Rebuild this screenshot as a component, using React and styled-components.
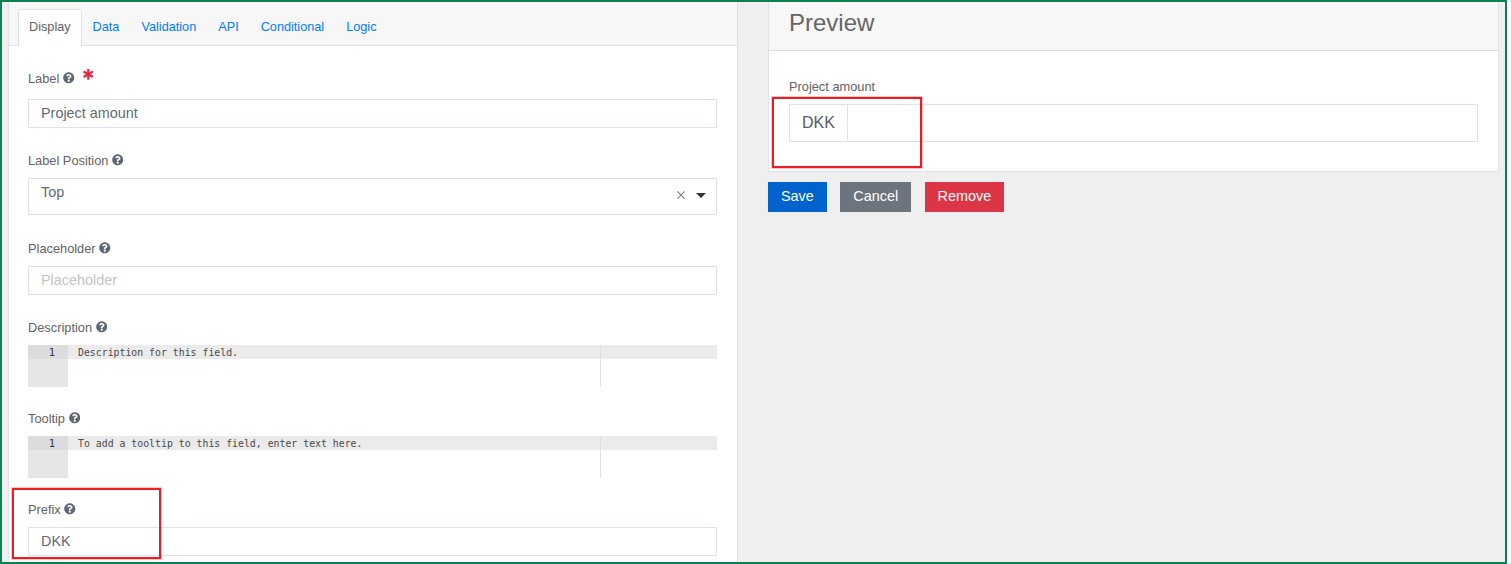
import styled, { createGlobalStyle } from "styled-components"
import { FaAsterisk, FaQuestionCircle } from "react-icons/fa"

const GlobalStyle = createGlobalStyle`
    html, body {
        margin: 0;
        padding: 0;
        background: #fff;
        overflow: hidden;
    }

    * {
        box-sizing: border-box;
    }
`

const Frame = styled.div`
    position: relative;
    width: 1507px;
    height: 564px;
    border: 2px solid #0b8050;
    background: #efefef;
    overflow: hidden;
    display: grid;
    grid-template-columns: 736px 1fr;
    font-family: "Liberation Sans", Arial, sans-serif;
    color: #626262;
`

const LeftColumn = styled.section`
    padding-left: 6px;
    height: 100%;
    overflow: hidden;
`

const EditPanel = styled.div`
    width: 730px;
    height: 600px;
    background: #fff;
    border-left: 1px solid #dfe1e8;
    border-right: 1px solid #dfe1e8;
`

const TabBar = styled.nav`
    height: 44px;
    padding: 7px 0 0 9px;
    background: #f7f7f7;
    border-bottom: 1px solid #dfe1e8;
    display: flex;
    align-items: flex-start;
`

const Tab = styled.a`
    height: 37px;
    padding: 0 10px;
    border: 1px solid transparent;
    border-bottom: 0;
    border-radius: 4px 4px 0 0;
    font-size: 12.7px;
    line-height: 34px;
    color: ${(p) => (p.$active ? "#626262" : "#007bff")};
    background: ${(p) => (p.$active ? "#fff" : "transparent")};
    border-color: ${(p) => (p.$active ? "#dfe1e8" : "transparent")};
`

const FormBody = styled.div`
    padding: 23px 20px 0 19px;
`

const Field = styled.div`
    margin-bottom: ${(p) => p.$gap || 22}px;
`

const LabelRow = styled.div`
    height: 18px;
    margin-bottom: ${(p) => p.$gap || 9}px;
    display: flex;
    align-items: center;
    font-size: 12.8px;
    color: #626262;
`

const Help = styled(FaQuestionCircle)`
    width: 11.5px;
    height: 11.5px;
    margin-left: 3.5px;
    color: #5d6875;
`

const Required = styled(FaAsterisk)`
    width: 10.5px;
    height: 10.5px;
    margin: -7px 0 0 8.5px;
    color: #e0283f;
    stroke: #e0283f;
    stroke-width: 30;
`

const TextInput = styled.input`
    display: block;
    width: 100%;
    height: 29px;
    padding: 0 12px 1px;
    border: 1px solid #dfe1ec;
    border-radius: 0;
    outline: none;
    background: #fff;
    font-family: inherit;
    font-size: 14.4px;
    color: #626a73;

    &::placeholder {
        color: #c4c4c4;
        opacity: 1;
    }
`

const SelectBox = styled.div`
    height: 37px;
    padding: 4px 10px 0 12px;
    border: 1px solid #dfe1ec;
    display: flex;
    align-items: flex-start;
    font-size: 14.4px;
    line-height: 18px;
    color: #626a73;
`

const SelectValue = styled.span`
    flex: 1;
`

const SelectIcons = styled.span`
    margin-top: 8px;
    display: flex;
    align-items: center;
    gap: 11px;
`

const ClearIcon = styled.svg`
    width: 8px;
    height: 8px;
    stroke: #808080;
    stroke-width: 1.3;
    fill: none;
`

const Caret = styled.span`
    width: 0;
    height: 0;
    border-left: 5px solid transparent;
    border-right: 5px solid transparent;
    border-top: 5px solid #333;
`

const Editor = styled.div`
    position: relative;
    height: 42px;
    display: flex;
    font-family: "DejaVu Sans Mono", monospace;
    font-size: 9.85px;
    line-height: 15px;
`

const Gutter = styled.div`
    width: 40px;
    background: #e6e6e6;
    color: #333;
`

const GutterCell = styled.div`
    height: 14px;
    padding-right: 13px;
    text-align: right;
    background: #dcdcdc;
    font-size: 10.5px;
`

const CodeArea = styled.div`
    flex: 1;
`

const CodeLine = styled.div`
    height: 14px;
    padding-left: 10px;
    background: #ebebeb;
    color: #4a4a4a;
    white-space: pre;
`

const PrintMargin = styled.span`
    position: absolute;
    top: 0;
    bottom: 0;
    left: 572px;
    width: 1px;
    background: #e0e0e0;
`

const RightColumn = styled.section`
    padding: 0 6px 0 30px;
`

const PreviewCard = styled.div`
    background: #fff;
    border: 1px solid #dfe1e8;
    border-top: 0;
`

const PreviewHeader = styled.header`
    height: 49px;
    padding: 0 20px 6px;
    background: #f7f7f7;
    border-bottom: 1px solid #dcdcdc;
    display: flex;
    align-items: center;
    font-size: 24px;
    color: #666;
`

const PreviewBody = styled.div`
    padding: 27px 20px 29px;
`

const PreviewLabel = styled.div`
    height: 18px;
    margin-bottom: 8px;
    font-size: 12.8px;
    line-height: 18px;
    color: #626262;
`

const InputGroup = styled.div`
    height: 38px;
    border: 1px solid #dfe1ec;
    display: flex;
`

const Addon = styled.span`
    width: 58px;
    border-right: 1px solid #dfe1ec;
    display: flex;
    align-items: center;
    justify-content: center;
    font-size: 16px;
    color: #555d66;
`

const Actions = styled.div`
    margin-top: 10px;
    display: flex;
    gap: 13.5px;
`

const Button = styled.button`
    height: 30px;
    padding: 0 13px 2px;
    border: 0;
    border-radius: 0;
    background: ${(p) => p.$color};
    color: #fff;
    font-family: inherit;
    font-size: 14.4px;
`

// the red marks someone drew on top of the screenshot
const Callout = styled.div`
    position: absolute;
    left: ${(p) => p.$x}px;
    top: ${(p) => p.$y}px;
    width: ${(p) => p.$w}px;
    height: ${(p) => p.$h}px;
    border: 2px solid #ed1c24;
    box-shadow: 0 0 0 1px rgba(237, 28, 36, 0.25);
    pointer-events: none;
`

const TABS = ["Display", "Data", "Validation", "API", "Conditional", "Logic"]

function FieldLabel({ text, required, gap }) {
    return (
        <LabelRow $gap={gap}>
            {text}
            <Help />
            {required && <Required />}
        </LabelRow>
    )
}

function CodeEditor({ text }) {
    return (
        <Editor>
            <Gutter>
                <GutterCell>1</GutterCell>
            </Gutter>
            <CodeArea>
                <CodeLine>{text}</CodeLine>
            </CodeArea>
            <PrintMargin />
        </Editor>
    )
}

export default function App() {
    return (
        <Frame>
            <GlobalStyle />
            <LeftColumn>
                <EditPanel>
                    <TabBar>
                        {TABS.map((tab, i) => (
                            <Tab key={tab} $active={i === 0}>{tab}</Tab>
                        ))}
                    </TabBar>
                    <FormBody>
                        <Field $gap={23}>
                            <FieldLabel text="Label" required gap={12} />
                            <TextInput readOnly value="Project amount" />
                        </Field>
                        <Field $gap={24}>
                            <FieldLabel text="Label Position" />
                            <SelectBox>
                                <SelectValue>Top</SelectValue>
                                <SelectIcons>
                                    <ClearIcon viewBox="0 0 9 9">
                                        <path d="M0.5 0.5L8.5 8.5M8.5 0.5L0.5 8.5" />
                                    </ClearIcon>
                                    <Caret />
                                </SelectIcons>
                            </SelectBox>
                        </Field>
                        <Field $gap={23}>
                            <FieldLabel text="Placeholder" />
                            <TextInput readOnly placeholder="Placeholder" />
                        </Field>
                        <Field>
                            <FieldLabel text="Description" />
                            <CodeEditor text="Description for this field." />
                        </Field>
                        <Field>
                            <FieldLabel text="Tooltip" />
                            <CodeEditor text="To add a tooltip to this field, enter text here." />
                        </Field>
                        <Field>
                            <FieldLabel text="Prefix" />
                            <TextInput readOnly value="DKK" />
                        </Field>
                    </FormBody>
                </EditPanel>
            </LeftColumn>
            <RightColumn>
                <PreviewCard>
                    <PreviewHeader>Preview</PreviewHeader>
                    <PreviewBody>
                        <PreviewLabel>Project amount</PreviewLabel>
                        <InputGroup>
                            <Addon>DKK</Addon>
                        </InputGroup>
                    </PreviewBody>
                </PreviewCard>
                <Actions>
                    <Button $color="#0062cc">Save</Button>
                    <Button $color="#6c757d">Cancel</Button>
                    <Button $color="#dc3545">Remove</Button>
                </Actions>
            </RightColumn>
            <Callout $x={10} $y={486} $w={149} $h={71} />
            <Callout $x={770} $y={95} $w={150} $h={71} />
        </Frame>
    )
}
